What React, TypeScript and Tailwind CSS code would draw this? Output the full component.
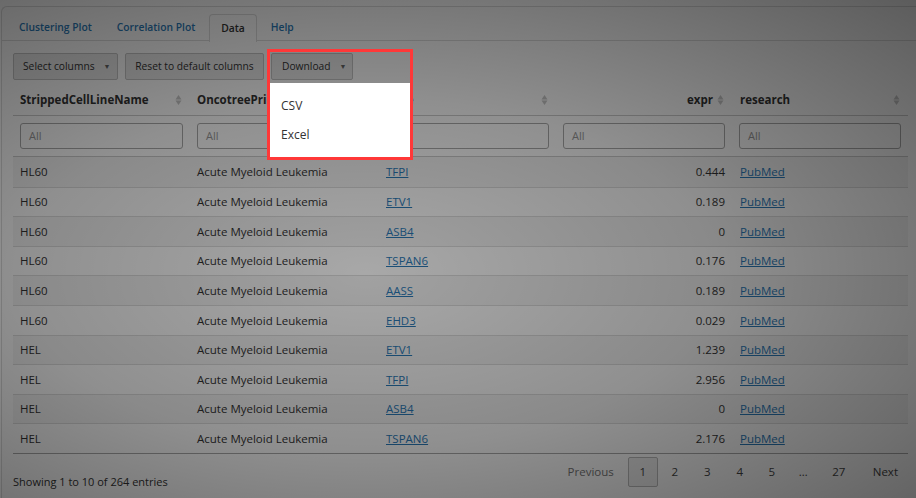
import React from "react";

interface Row {
  cell: string;
  lineage: string;
  gene: string;
  expr: string;
}

const rows: Row[] = [
  { cell: "HL60", lineage: "Acute Myeloid Leukemia", gene: "TFPI", expr: "0.444" },
  { cell: "HL60", lineage: "Acute Myeloid Leukemia", gene: "ETV1", expr: "0.189" },
  { cell: "HL60", lineage: "Acute Myeloid Leukemia", gene: "ASB4", expr: "0" },
  { cell: "HL60", lineage: "Acute Myeloid Leukemia", gene: "TSPAN6", expr: "0.176" },
  { cell: "HL60", lineage: "Acute Myeloid Leukemia", gene: "AASS", expr: "0.189" },
  { cell: "HL60", lineage: "Acute Myeloid Leukemia", gene: "EHD3", expr: "0.029" },
  { cell: "HEL", lineage: "Acute Myeloid Leukemia", gene: "ETV1", expr: "1.239" },
  { cell: "HEL", lineage: "Acute Myeloid Leukemia", gene: "TFPI", expr: "2.956" },
  { cell: "HEL", lineage: "Acute Myeloid Leukemia", gene: "ASB4", expr: "0" },
  { cell: "HEL", lineage: "Acute Myeloid Leukemia", gene: "TSPAN6", expr: "2.176" },
];

const SortIcon: React.FC = () => (
  <svg width="7" height="12" viewBox="0 0 7 12" className="shrink-0">
    <path d="M3.5 1 L6.5 5.5 L0.5 5.5 Z" fill="#c8c8c8" />
    <path d="M3.5 11 L6.5 6.5 L0.5 6.5 Z" fill="#c8c8c8" />
  </svg>
);

const Caret: React.FC = () => (
  <span className="ml-[9px] text-[7px] leading-none text-[#666]">▼</span>
);

const FilterInput: React.FC = () => (
  <div className="h-[26px] w-full rounded-[3px] border border-[#aaa] bg-white pl-[8px] text-[11px] leading-[24px] text-[#999]">
    All
  </div>
);

const App: React.FC = () => {
  return (
    <div
      className="relative h-[498px] w-[916px] overflow-hidden bg-white text-[11.5px] text-[#333]"
      style={{ fontFamily: '"Open Sans", "Liberation Sans", sans-serif' }}
    >
      {/* panel */}
      <div className="ml-[1px] mt-[6px] h-[600px] w-[960px] rounded-tl-[6px] border-l border-t border-[#ddd] pt-[7px]">
        {/* tabs */}
        <div className="flex h-[27px] border-b border-[#ddd] pl-[6px] text-[10.3px] font-semibold">
          <div className="mr-[3px] flex h-[27px] items-center px-[11px] text-[#2a7ab8]">Clustering Plot</div>
          <div className="mr-[3px] flex h-[27px] items-center px-[11px] text-[#2a7ab8]">Correlation Plot</div>
          <div className="mr-[3px] flex h-[28px] items-center rounded-t-[4px] border border-b-0 border-[#ddd] bg-white px-[11px] text-[#333]">
            Data
          </div>
          <div className="flex h-[27px] items-center px-[11px] text-[#2a7ab8]">Help</div>
        </div>

        <div className="w-[906px] pl-[11px]">
          {/* toolbar */}
          <div className="mt-[12px] flex gap-[7px] text-[10.25px]">
            <div className="flex h-[27px] w-[105px] items-center rounded-[2px] border border-[#c4c4c4] bg-[#e9e9e9] pl-[9px]">
              Select columns
              <Caret />
            </div>
            <div className="flex h-[27px] w-[139px] items-center justify-center rounded-[2px] border border-[#c4c4c4] bg-[#e9e9e9]">
              Reset to default columns
            </div>
            <div className="flex h-[27px] w-[82px] items-center rounded-[2px] border border-[#c4c4c4] bg-[#e9e9e9] pl-[10px]">
              Download
              <Caret />
            </div>
          </div>

          {/* header */}
          <div className="mt-[5px] grid h-[31px] w-[895px] grid-cols-[177px_189px_177px_176px_176px] items-center border-b border-[#ccc] font-bold">
            <div className="flex items-center justify-between pl-[7px] pr-[8px]">
              <span>StrippedCellLineName</span>
              <SortIcon />
            </div>
            <div className="flex items-center justify-between pl-[7px] pr-[8px]">
              <span>OncotreePrimary</span>
              <SortIcon />
            </div>
            <div className="flex items-center justify-between pl-[7px] pr-[8px]">
              <span>gene</span>
              <SortIcon />
            </div>
            <div className="flex items-center justify-end gap-[4px] pl-[7px] pr-[8px]">
              <span>expr</span>
              <SortIcon />
            </div>
            <div className="flex items-center justify-between pl-[8px] pr-[8px]">
              <span>research</span>
              <SortIcon />
            </div>
          </div>

          {/* filters */}
          <div className="grid h-[41px] w-[895px] grid-cols-[177px_189px_177px_176px_176px] items-center border-b border-[#ccc]">
            <div className="px-[7px]"><FilterInput /></div>
            <div className="px-[7px]"><FilterInput /></div>
            <div className="px-[7px]"><FilterInput /></div>
            <div className="px-[7px]"><FilterInput /></div>
            <div className="px-[7px]"><FilterInput /></div>
          </div>

          {/* body */}
          <div className="w-[895px] border-b border-[#aaa]">
            {rows.map((r, i) => (
              <div
                key={i}
                className={`grid h-[29.6px] grid-cols-[177px_189px_177px_176px_176px] items-center ${
                  i > 0 ? "border-t border-[#ddd]" : ""
                } ${i % 2 === 0 ? "bg-[#f5f5f5]" : "bg-white"}`}
              >
                <div className="pl-[7px]">{r.cell}</div>
                <div className="pl-[7px]">{r.lineage}</div>
                <div className="pl-[7px]">
                  <span className="text-[#2a7ab8] underline">{r.gene}</span>
                </div>
                <div className="pr-[7px] text-right">{r.expr}</div>
                <div className="pl-[8px]">
                  <span className="text-[#2a7ab8] underline">PubMed</span>
                </div>
              </div>
            ))}
          </div>

          {/* footer */}
          <div className="mt-[3px] flex w-[895px] items-start justify-between">
            <div className="pt-[17px] text-[11px]">Showing 1 to 10 of 264 entries</div>
            <div className="flex items-center text-[11.5px] text-[#444]">
              <div className="pr-[14px] text-[#777]">Previous</div>
              <div className="mr-[1px] flex h-[30px] w-[30px] items-center justify-center rounded-[2px] border border-[#bbb] bg-[#f0f0f0]">
                1
              </div>
              <div className="w-[32px] text-center">2</div>
              <div className="w-[33px] text-center">3</div>
              <div className="w-[32px] text-center">4</div>
              <div className="w-[32px] text-center">5</div>
              <div className="w-[31px] text-center">…</div>
              <div className="w-[40px] text-center">27</div>
              <div className="pl-[14px] pr-[10px]">Next</div>
            </div>
          </div>
        </div>
      </div>

      {/* dim overlay */}
      <div className="absolute inset-0 bg-[radial-gradient(ellipse_at_40%_55%,rgba(0,0,0,0.34)_0%,rgba(0,0,0,0.44)_45%,rgba(0,0,0,0.64)_100%)]" />

      {/* highlighted dropdown */}
      <div className="absolute left-[267px] top-[49px] flex h-[111px] w-[146px] flex-col justify-end border-[3px] border-[#ff3838]">
        <div className="h-[74px] bg-white pt-[9px] text-[12px] text-[#333]">
          <div className="flex h-[28px] items-center pl-[11px]">CSV</div>
          <div className="flex h-[29px] items-center pl-[11px]">Excel</div>
        </div>
      </div>
    </div>
  );
};

export default App;
